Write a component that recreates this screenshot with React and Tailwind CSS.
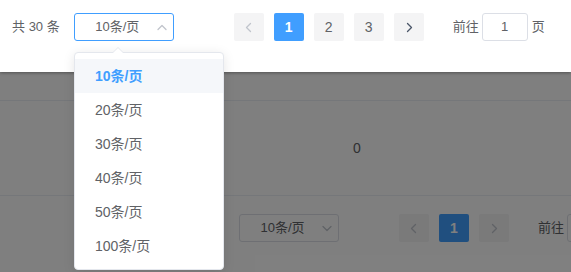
import { useState } from 'react'

const SIZES = [10, 20, 30, 40, 50, 100]

/* ---------------- ICONS ---------------- */
function Chevron({ dir = 'left', className = '' }) {
  const paths = {
    left: 'M6.5 1.5 L2.5 5.5 L6.5 9.5',
    right: 'M3.5 1.5 L7.5 5.5 L3.5 9.5',
    up: 'M1 5.5 L5 1.5 L9 5.5',
    down: 'M1 1.5 L5 5.5 L9 1.5',
  }
  const vertical = dir === 'up' || dir === 'down'
  return (
    <svg
      width={10}
      height={vertical ? 7 : 11}
      viewBox={vertical ? '0 0 10 7' : '0 0 10 11'}
      fill="none"
      className={className}
    >
      <path d={paths[dir]} stroke="currentColor" strokeWidth="1.3" strokeLinecap="round" strokeLinejoin="round" />
    </svg>
  )
}

/* ---------------- PAGINATION ---------------- */
function Pagination({ total, pages, active, open, nextDisabled }) {
  return (
    <div className="flex items-center text-[13px] text-[#606266]">
      {total !== undefined && <span className="mr-[14px] whitespace-nowrap">共 {total} 条</span>}

      <div
        className={`flex h-[28px] w-[100px] shrink-0 items-center rounded-[3px] border bg-white pl-[15px] ${
          open ? 'border-[#409eff]' : 'border-[#dcdfe6]'
        }`}
      >
        <span className="w-[55px] text-center">10条/页</span>
        <Chevron dir={open ? 'up' : 'down'} className="ml-auto mr-[6px] text-[#c0c4cc]" />
      </div>

      <div className="ml-[60px] flex gap-[10px]">
        <button className="flex h-[28px] w-[30px] items-center justify-center rounded-[2px] bg-[#f4f4f5] text-[#c0c4cc]">
          <Chevron dir="left" />
        </button>
        {pages.map(p => (
          <button
            key={p}
            className={`flex h-[28px] w-[30px] items-center justify-center rounded-[2px] text-[14px] ${
              p === active ? 'bg-[#409eff] font-bold text-white' : 'bg-[#f4f4f5] text-[#606266]'
            }`}
          >
            {p}
          </button>
        ))}
        <button
          className={`flex h-[28px] w-[30px] items-center justify-center rounded-[2px] bg-[#f4f4f5] ${
            nextDisabled ? 'text-[#c0c4cc]' : 'text-[#4a5568]'
          }`}
        >
          <Chevron dir="right" />
        </button>
      </div>

      <span className="ml-[29px] whitespace-nowrap">前往</span>
      <div className="ml-[3px] flex h-[28px] w-[46px] shrink-0 items-center justify-center rounded-[3px] border border-[#dcdfe6] bg-white">
        1
      </div>
      <span className="ml-[4px]">页</span>
    </div>
  )
}

/* ---------------- APP ---------------- */
export default function App() {
  const [size] = useState(10)

  return (
    <div className="relative h-[272px] w-[571px] overflow-hidden bg-white font-['Liberation_Sans','Noto_Sans_CJK_SC',sans-serif]">
      {/* header with open pager */}
      <header className="relative z-20 h-[72px] bg-white pl-3 pt-[13px] shadow-[0_1px_3px_rgba(0,0,0,0.35)]">
        <Pagination total={30} pages={[1, 2, 3]} active={1} open />
      </header>

      {/* page beneath the mask */}
      <section>
        <div className="h-[29px] border-b border-[#ebeef5]" />
        <div className="grid h-[95px] grid-cols-4 items-center border-b border-[#ebeef5] text-[14px] text-[#606266]">
          <div />
          <div />
          <div className="text-center">0</div>
          <div />
        </div>
        <div className="pl-[239px] pt-[18px]">
          <Pagination pages={[1]} active={1} nextDisabled />
        </div>
      </section>

      {/* mask */}
      <div className="absolute inset-x-0 bottom-0 top-[72px] z-10 bg-black/50" />

      {/* size dropdown */}
      <div className="absolute left-[74px] top-[52px] z-30 w-[150px] rounded-[4px] border border-[#e4e7ed] bg-white py-[6px] shadow-[0_2px_12px_rgba(0,0,0,0.1)]">
        <div className="absolute -top-[6px] left-[37px] h-0 w-0 border-x-[6px] border-b-[6px] border-x-transparent border-b-[#e4e7ed]" />
        <div className="absolute -top-[5px] left-[38px] h-0 w-0 border-x-[5px] border-b-[5px] border-x-transparent border-b-white" />
        {SIZES.map(s => (
          <div
            key={s}
            className={`flex h-[34px] items-center pl-5 text-[14px] ${
              s === size ? 'bg-[#f5f7fa] font-bold text-[#409eff]' : 'text-[#606266]'
            }`}
          >
            {s}条/页
          </div>
        ))}
      </div>
    </div>
  )
}
